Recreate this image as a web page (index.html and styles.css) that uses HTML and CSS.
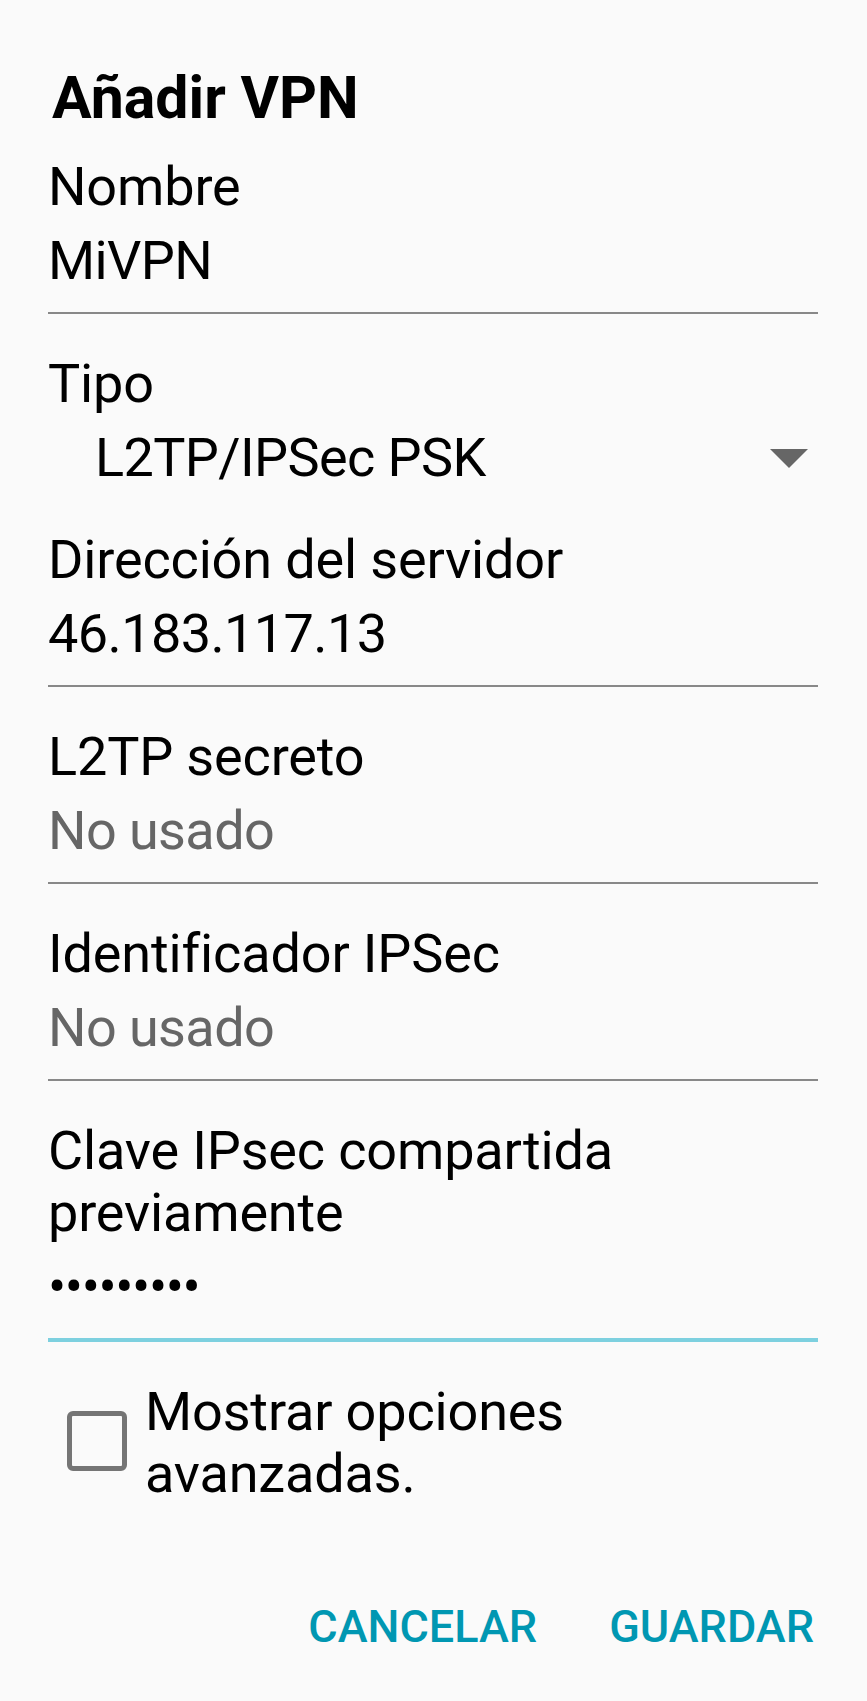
FILE: index.html
```html
<!DOCTYPE html>
<html lang="es">
<head>
<meta charset="utf-8">
<title>Añadir VPN</title>
<link rel="stylesheet" href="styles.css">
</head>
<body>
<div class="dialog">
  <h1 class="title">Añadir VPN</h1>

  <div class="field">
    <div class="label">Nombre</div>
    <div class="value">MiVPN</div>
  </div>

  <div class="spinner-field">
    <div class="label">Tipo</div>
    <div class="spinner">
      <span class="spinner-text">L2TP/IPSec PSK</span>
      <svg class="arrow" width="38" height="19" viewBox="0 0 38 19"><polygon points="0,0 38,0 19,19" fill="#666666"/></svg>
    </div>
  </div>

  <div class="field">
    <div class="label">Dirección del servidor</div>
    <div class="value">46.183.117.13</div>
  </div>

  <div class="field">
    <div class="label">L2TP secreto</div>
    <div class="value hint">No usado</div>
  </div>

  <div class="field">
    <div class="label">Identificador IPSec</div>
    <div class="value hint">No usado</div>
  </div>

  <div class="field focused">
    <div class="label">Clave IPsec compartida<br>previamente</div>
    <div class="value password">•••••••••</div>
  </div>

  <div class="check-row">
    <span class="checkbox"></span>
    <span class="check-label">Mostrar opciones<br>avanzadas.</span>
  </div>

  <div class="buttons">
    <span class="btn">CANCELAR</span>
    <span class="btn">GUARDAR</span>
  </div>
</div>
</body>
</html>
```

FILE: styles.css
```css
html, body {
  margin: 0;
  padding: 0;
  background: #fafafa;
}

body {
  font-family: Roboto, "Liberation Sans", sans-serif;
  color: #000000;
  width: 867px;
  height: 1701px;
  overflow: hidden;
}

.dialog {
  padding: 62px 49px 0 48px;
}

.title {
  margin: 0 0 22px 4px;
  font-size: 59px;
  line-height: 72px;
  font-weight: 700;
}

.label,
.value,
.spinner-text,
.check-label {
  font-size: 54px;
  line-height: 62px;
}

.label,
.check-label {
  letter-spacing: -0.15px;
}

.value,
.spinner-text {
  letter-spacing: -0.6px;
}

.field {
  padding-bottom: 20px;
  border-bottom: 2px solid #888888;
  margin-bottom: 39px;
}

.value {
  margin-top: 12px;
}

.hint {
  color: #666666;
}

.spinner-field {
  margin-bottom: 40px;
}

.spinner {
  display: flex;
  align-items: center;
  justify-content: space-between;
  margin-top: 12px;
  padding-left: 47px;
}

.arrow {
  display: block;
  margin-right: 10px;
}

.focused {
  border-bottom: 4px solid #7dd0df;
  padding-bottom: 20px;
  margin-bottom: 39px;
}

.password {
  letter-spacing: -1.4px;
}

.check-row {
  display: flex;
  align-items: center;
  padding-left: 19px;
}

.checkbox {
  width: 50px;
  height: 50px;
  border: 5px solid #757575;
  border-radius: 6px;
  flex: none;
  margin-bottom: 4px;
}

.check-label {
  margin-left: 18px;
}

.buttons {
  display: flex;
  justify-content: flex-end;
  gap: 72px;
  margin-top: 94px;
  padding-right: 4px;
}

.btn {
  color: #0097b2;
  font-size: 45px;
  line-height: 56px;
  font-weight: 500;
}
```
